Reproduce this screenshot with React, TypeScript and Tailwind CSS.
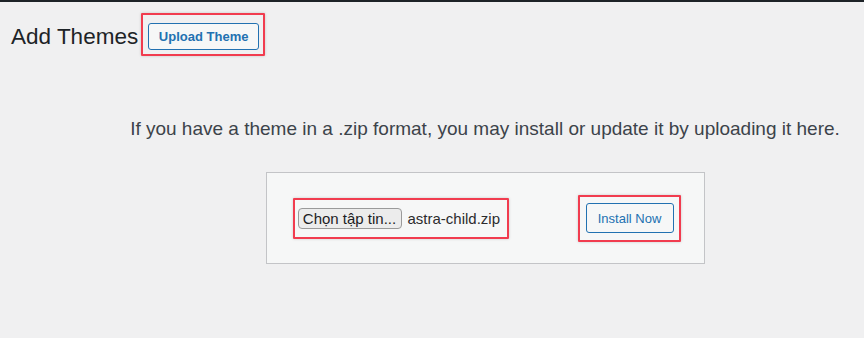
import React from "react";

const font = { fontFamily: '"Liberation Sans", Arial, sans-serif' };

function RedMark({ className }: { className: string }) {
  return (
    <span
      className={`pointer-events-none absolute rounded-[1px] border-2 border-[#f13c4f] shadow-[0_0_3px_rgba(0,0,0,0.18)] ${className}`}
    />
  );
}

export default function App() {
  return (
    <div
      className="h-[338px] w-[864px] overflow-hidden bg-[#f0f0f1] text-[#3c434a]"
      style={font}
    >
      <div className="h-[2px] w-full bg-[#1d2327]" />
      <div className="flex items-center pl-[11px] pt-[20px]">
        <h1 className="text-[22.5px] font-normal leading-[29px] text-[#1d2327]">
          Add Themes
        </h1>
        <span className="relative ml-[10px] inline-flex">
          <button className="h-[27px] w-[111px] rounded-[3px] border border-[#2271b1] bg-[#f6f7f7] text-[13px] font-bold leading-none text-[#2271b1]">
            Upload Theme
          </button>
          <RedMark className="-bottom-[6px] -left-[7px] -right-[6px] -top-[10px]" />
        </span>
      </div>

      <div className="flex w-[970px] flex-col items-center pt-[64px]">
        <p className="text-[19px] leading-[28px] text-[#3c434a]">
          If you have a theme in a .zip format, you may install or update it by
          uploading it here.
        </p>
        <div className="mt-[29px] flex h-[92px] w-[439px] items-center justify-between border border-[#c3c4c7] bg-[#f6f7f7] px-[30px]">
          <span className="relative ml-[1px] inline-flex items-center">
            <span className="flex h-[21px] w-[104px] items-center justify-center rounded-[4px] border border-[#9a9a9a] bg-[#ececec] text-[15px] leading-none text-[#1d1d1f]">
              Chọn tập tin...
            </span>
            <span className="ml-[6px] text-[15px] leading-none text-[#2c2c2e]">
              astra-child.zip
            </span>
            <RedMark className="-bottom-[10px] -left-[5px] -right-[9px] -top-[10px]" />
          </span>
          <span className="relative inline-flex">
            <button className="h-[30px] w-[88px] rounded-[3px] border border-[#2271b1] bg-[#f6f7f7] text-[13px] leading-none text-[#2271b1]">
              Install Now
            </button>
            <RedMark className="-bottom-[9px] -left-[8px] -right-[7px] -top-[8px]" />
          </span>
        </div>
      </div>
    </div>
  );
}
